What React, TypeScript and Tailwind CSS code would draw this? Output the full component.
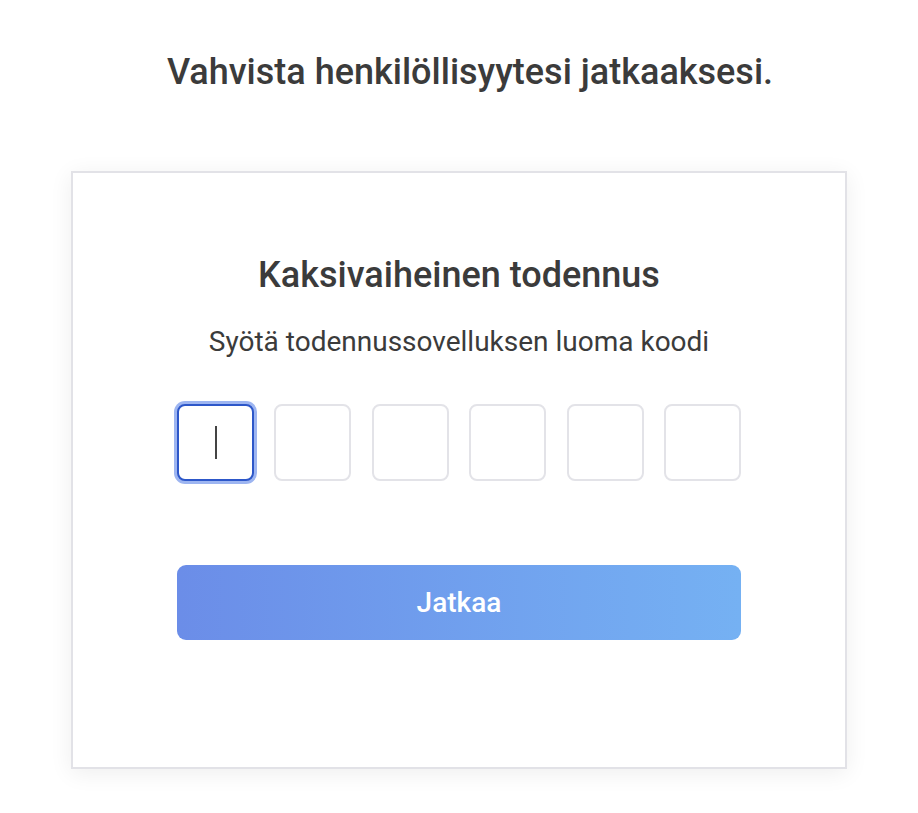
import React from 'react';

const font = { fontFamily: 'Roboto, "Noto Sans", sans-serif' };

// One digit cell of the code field; the first one holds focus with a caret.
const CodeCell: React.FC<{ active?: boolean }> = ({ active }) =>
  active ? (
    <div className="w-[77px] h-[77px] rounded-[8px] border-2 border-[#2d57c9] ring-[3px] ring-[#9db5f1] bg-white flex items-center justify-center">
      <span className="block w-[2px] h-[33px] bg-[#444]" />
    </div>
  ) : (
    <div className="w-[77px] h-[77px] rounded-[8px] border-2 border-[#e3e3e8] bg-white" />
  );

export default function App() {
  return (
    <div className="min-h-[813px] w-full bg-white text-[#3b3b3b]" style={font}>
      {/* Page heading */}
      <h1 className="pt-[50px] pl-[22px] text-center text-[36px] leading-[44px] font-medium">
        Vahvista henkilöllisyytesi jatkaaksesi.
      </h1>

      {/* Card */}
      <div className="mx-auto mt-[77px] w-[776px] h-[598px] border-2 border-[#e2e2e7] bg-white shadow-[0_4px_22px_rgba(0,0,0,0.07)] px-[104px] pt-[80px]">
        <h2 className="text-center text-[36px] leading-[44px] font-medium">Kaksivaiheinen todennus</h2>
        <p className="mt-[27px] text-center text-[28px] leading-[36px]">
          Syötä todennussovelluksen luoma koodi
        </p>

        <div className="mt-[44px] flex justify-between">
          <CodeCell active />
          <CodeCell />
          <CodeCell />
          <CodeCell />
          <CodeCell />
          <CodeCell />
        </div>

        <button
          type="button"
          className="mt-[84px] w-full h-[75px] rounded-[9px] bg-gradient-to-r from-[#6b8de8] to-[#75b1f3] text-white text-[28px] font-medium"
        >
          Jatkaa
        </button>
      </div>
    </div>
  );
}
